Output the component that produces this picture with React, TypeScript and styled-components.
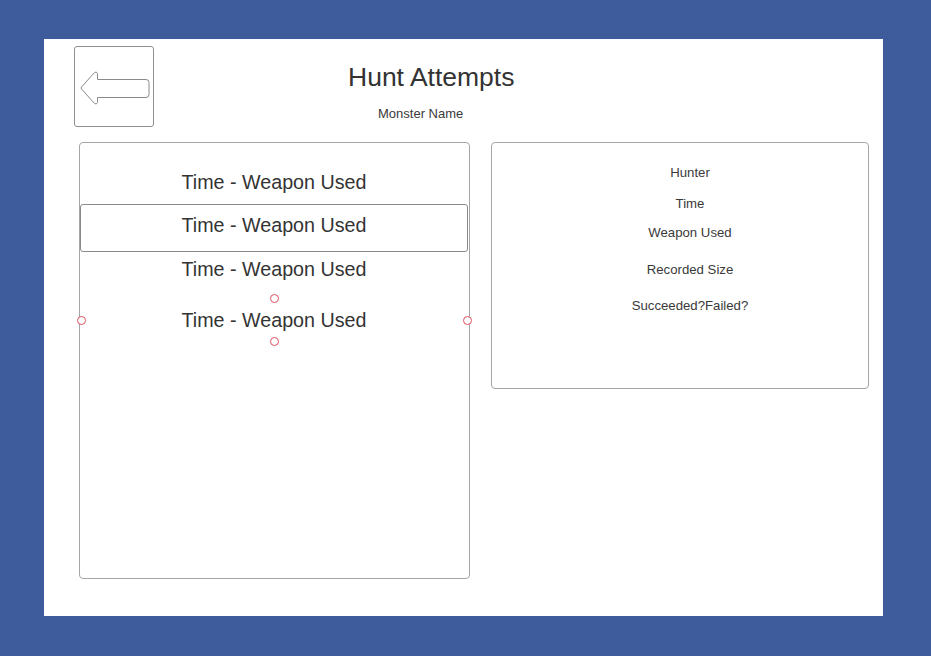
import React from "react";
import styled, { createGlobalStyle } from "styled-components";

const Global = createGlobalStyle`
  html, body { margin: 0; padding: 0; }
  body {
    background: #3e5b9c;
    width: 931px;
    height: 656px;
    overflow: hidden;
    font-family: "Liberation Sans", Arial, sans-serif;
    color: #333;
  }
`;

const Canvas = styled.div`
  margin: 39px 0 0 44px;
  width: 839px;
  height: 577px;
  background: #fff;
  box-sizing: border-box;
  padding: 7px 0 0 30px;
  display: flex;
  flex-direction: column;
`;

const Header = styled.header`
  display: flex;
  align-items: flex-start;
  height: 80px;
`;

const BackButton = styled.button`
  width: 80px;
  height: 81px;
  box-sizing: border-box;
  border: 1px solid #8f8f8f;
  border-radius: 3px;
  background: #fff;
  padding: 0;
  display: block;
  cursor: pointer;
`;

const TitleBlock = styled.div`
  margin: 16px 0 0 194px;
  display: flex;
  flex-direction: column;
  align-items: flex-start;
`;

const Title = styled.h1`
  margin: 0;
  font-weight: 400;
  font-size: 26.5px;
  line-height: 30px;
  color: #333;
`;

const Subtitle = styled.div`
  margin: 14px 0 0 30px;
  font-size: 13px;
  line-height: 16px;
  color: #3a3a3a;
`;

const Panels = styled.div`
  display: flex;
  align-items: flex-start;
  gap: 21px;
  margin: 16px 0 0 5px;
`;

const Panel = styled.section<{ $w: number; $h: number }>`
  width: ${(p) => p.$w}px;
  height: ${(p) => p.$h}px;
  box-sizing: border-box;
  border: 1px solid #a6a6a6;
  border-radius: 4px;
  display: flex;
  flex-direction: column;
`;

const AttemptList = styled.div`
  display: flex;
  flex-direction: column;
  padding-top: 17px;
`;

const AttemptRow = styled.div<{ $h: number; $mt: number; $selected?: boolean }>`
  position: relative;
  height: ${(p) => p.$h}px;
  margin-top: ${(p) => p.$mt}px;
  box-sizing: border-box;
  display: flex;
  align-items: center;
  justify-content: center;
  font-size: 19.7px;
  line-height: 24px;
  color: #333;
  border: 1px solid ${(p) => (p.$selected ? "#8a8a8a" : "transparent")};
  border-radius: 3px;
  margin-right: 1px;
  padding-bottom: ${(p) => (p.$selected ? 7 : 0)}px;
`;

const Handle = styled.span<{ $x: string; $y: string }>`
  position: absolute;
  left: ${(p) => p.$x};
  top: ${(p) => p.$y};
  width: 7px;
  height: 7px;
  margin: -4px 0 0 -4px;
  border: 1px solid #e0505f;
  border-radius: 50%;
  background: #fff;
`;

const Details = styled.div`
  display: flex;
  flex-direction: column;
  align-items: center;
  padding: 22px 0 0 20px;
`;

const DetailLine = styled.div<{ $mt: number }>`
  margin-top: ${(p) => p.$mt}px;
  font-size: 13.2px;
  line-height: 16px;
  color: #3a3a3a;
`;

const rows = [
  { h: 44, mt: 0 },
  { h: 48, mt: 0, selected: true },
  { h: 34, mt: 0 },
  { h: 45, mt: 11, handles: true },
];

const details = [
  { text: "Hunter", mt: 0 },
  { text: "Time", mt: 15 },
  { text: "Weapon Used", mt: 13 },
  { text: "Recorded Size", mt: 21 },
  { text: "Succeeded?Failed?", mt: 20 },
];

const ArrowIcon = () => (
  <svg width="78" height="79" viewBox="0 0 78 79" style={{ display: "block" }}>
    <path
      d="M6.5 40 L19.5 25.5 Q21.5 24 22.5 26.5 L22.5 32.5 H71 Q74 32.5 74 35.5 V47.5 Q74 50.5 71 50.5 H22.5 V55.5 Q21.5 58 19.5 56.5 L6.5 42 Q5.5 41 6.5 40 Z"
      fill="none"
      stroke="#8a8a8a"
      strokeWidth="1"
      strokeLinejoin="round"
    />
  </svg>
);

export default function App() {
  return (
    <>
      <Global />
      <Canvas>
        <Header>
          <BackButton aria-label="Back">
            <ArrowIcon />
          </BackButton>
          <TitleBlock>
            <Title>Hunt Attempts</Title>
            <Subtitle>Monster Name</Subtitle>
          </TitleBlock>
        </Header>
        <Panels>
          <Panel $w={391} $h={437}>
            <AttemptList>
              {rows.map((r, i) => (
                <AttemptRow key={i} $h={r.h} $mt={r.mt} $selected={r.selected}>
                  Time - Weapon Used
                  {r.handles && (
                    <>
                      <Handle $x="50%" $y="0%" />
                      <Handle $x="50%" $y="100%" />
                      <Handle $x="0%" $y="50%" />
                      <Handle $x="100%" $y="50%" />
                    </>
                  )}
                </AttemptRow>
              ))}
            </AttemptList>
          </Panel>
          <Panel $w={378} $h={247}>
            <Details>
              {details.map((d) => (
                <DetailLine key={d.text} $mt={d.mt}>
                  {d.text}
                </DetailLine>
              ))}
            </Details>
          </Panel>
        </Panels>
      </Canvas>
    </>
  );
}
